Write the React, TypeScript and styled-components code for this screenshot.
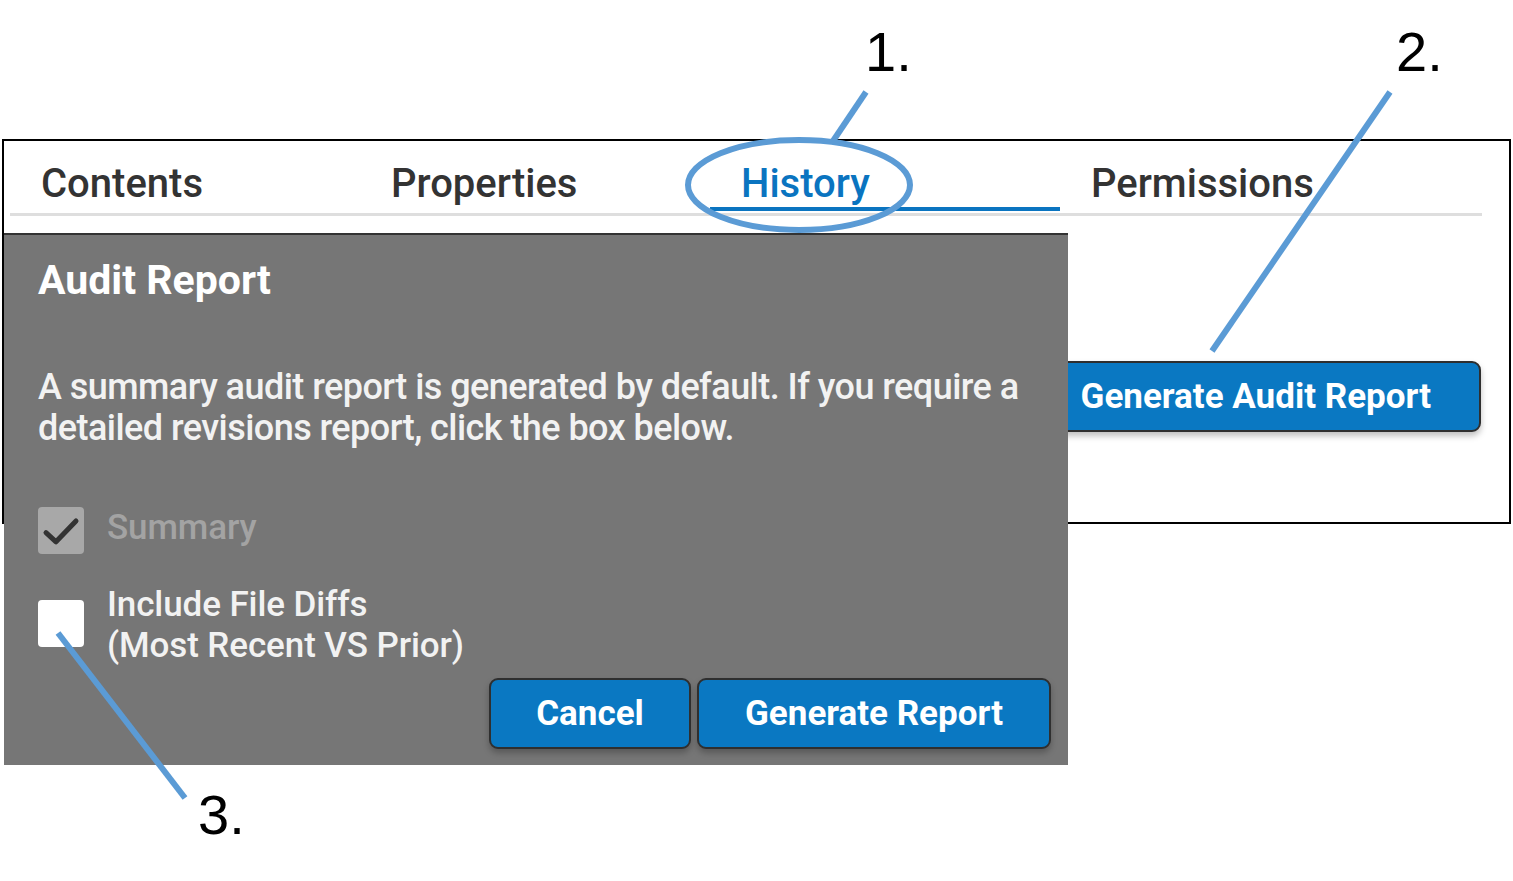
import React from "react";
import styled, { createGlobalStyle } from "styled-components";

const GlobalStyle = createGlobalStyle`
  html, body { margin: 0; padding: 0; background: #ffffff; }
  body { font-family: Roboto, "Liberation Sans", sans-serif; width: 1513px; height: 881px; overflow: hidden; }
  * { box-sizing: border-box; }
`;

const Page = styled.div`
  position: relative;
  width: 1513px;
  height: 881px;
  padding-top: 139px;
  padding-left: 2px;
`;

const Frame = styled.div`
  width: 1509px;
  height: 385px;
  border: 2px solid #000;
  background: #fff;
  display: flex;
  flex-direction: column;
`;

const TabList = styled.div`
  display: flex;
  margin: 0 27px 0 6px;
  padding-bottom: 2px;
  border-bottom: 3px solid #dedede;
`;

const Tab = styled.div<{ $active?: boolean; $grow?: boolean }>`
  width: ${(p) => (p.$grow ? "auto" : "350px")};
  flex: ${(p) => (p.$grow ? "1" : "none")};
  padding: 23px 0 3px 31px;
  font-size: 40px;
  line-height: 40px;
  font-weight: 500;
  color: ${(p) => (p.$active ? "#0a74c0" : "#333333")};
  border-bottom: 4px solid ${(p) => (p.$active ? "#0a74c0" : "transparent")};
`;

const ActionRow = styled.div`
  display: flex;
  justify-content: flex-end;
  padding: 145px 28px 0 0;
`;

const BlueButton = styled.button<{ $w?: number }>`
  height: 71px;
  ${(p) => (p.$w ? `width: ${p.$w}px;` : "padding: 0 48px;")}
  background: #0a78c2;
  color: #ffffff;
  border: 2px solid #2f2f2f;
  border-radius: 9px;
  font-family: Roboto, "Liberation Sans", sans-serif;
  font-weight: 700;
  font-size: 35px;
  letter-spacing: 0;
  box-shadow: 0 4px 6px rgba(0, 0, 0, 0.25);
  display: flex;
  align-items: center;
  justify-content: center;
`;

const Dialog = styled.div`
  position: absolute;
  left: 4px;
  top: 233px;
  width: 1064px;
  height: 532px;
  background: #767676;
  border-top: 2px solid #333;
  padding: 25px 17px 0 34px;
  display: flex;
  flex-direction: column;
  color: #f4f4f4;
`;

const Title = styled.h2`
  margin: 0;
  font-size: 41px;
  line-height: 41px;
  font-weight: 700;
  letter-spacing: 0;
  color: #ffffff;
`;

const Description = styled.p`
  margin: 66px 0 0 0;
  font-size: 36px;
  line-height: 41px;
  font-weight: 500;
  letter-spacing: -0.55px;
  color: #f2f2f2;
`;

const CheckRow = styled.div<{ $top: number }>`
  display: flex;
  align-items: flex-start;
  gap: 23px;
  margin-top: ${(p) => p.$top}px;
`;

const Box = styled.div<{ $disabled?: boolean; $offset?: number }>`
  width: 46px;
  height: 47px;
  flex: none;
  margin-top: ${(p) => p.$offset ?? 0}px;
  border-radius: 4px;
  background: ${(p) => (p.$disabled ? "#a8a8a8" : "#ffffff")};
  display: flex;
  align-items: center;
  justify-content: center;
`;

const Label = styled.div<{ $disabled?: boolean }>`
  font-size: 35px;
  line-height: 41px;
  font-weight: 500;
  letter-spacing: -0.1px;
  color: ${(p) => (p.$disabled ? "#a3a3a3" : "#f2f2f2")};
`;

const Footer = styled.div`
  display: flex;
  justify-content: flex-end;
  gap: 6px;
  margin-top: 12px;
`;

const Overlay = styled.svg`
  position: absolute;
  left: 0;
  top: 0;
  pointer-events: none;
`;

const Callout = styled.span<{ $x: number; $y: number }>`
  position: absolute;
  left: ${(p) => p.$x}px;
  top: ${(p) => p.$y}px;
  font-family: "Liberation Sans", Arial, sans-serif;
  font-size: 56px;
  line-height: 56px;
  color: #000;
`;

export default function App() {
  return (
    <>
      <GlobalStyle />
      <Page>
        <Frame>
          <TabList>
            <Tab>Contents</Tab>
            <Tab>Properties</Tab>
            <Tab $active>History</Tab>
            <Tab $grow>Permissions</Tab>
          </TabList>
          <ActionRow>
            <BlueButton>Generate Audit Report</BlueButton>
          </ActionRow>
        </Frame>

        <Dialog>
          <Title>Audit Report</Title>
          <Description>
            A summary audit report is generated by default. If you require a
            <br />
            detailed revisions report, click the box below.
          </Description>
          <CheckRow $top={58}>
            <Box $disabled>
              <svg width="40" height="40" viewBox="0 0 24 24" fill="none" stroke="#333" strokeWidth="3" strokeLinecap="round" strokeLinejoin="round">
                <path d="M3 13 9 18.5 21 6" />
              </svg>
            </Box>
            <Label $disabled>Summary</Label>
          </CheckRow>
          <CheckRow $top={30}>
            <Box $offset={16} />
            <Label>
              Include File Diffs
              <br />
              (Most Recent VS Prior)
            </Label>
          </CheckRow>
          <Footer>
            <BlueButton $w={202}>Cancel</BlueButton>
            <BlueButton $w={354}>Generate Report</BlueButton>
          </Footer>
        </Dialog>

        <Overlay width="1513" height="881" viewBox="0 0 1513 881">
          <g stroke="#5b9bd5" strokeWidth="6" fill="none">
            <line x1="866" y1="92" x2="833" y2="141" />
            <ellipse cx="799" cy="185" rx="111" ry="45" />
            <line x1="1390" y1="92" x2="1212" y2="351" />
            <line x1="58" y1="633" x2="185" y2="798" />
          </g>
        </Overlay>
        <Callout $x={865} $y={24}>1.</Callout>
        <Callout $x={1396} $y={24}>2.</Callout>
        <Callout $x={198} $y={787}>3.</Callout>
      </Page>
    </>
  );
}
